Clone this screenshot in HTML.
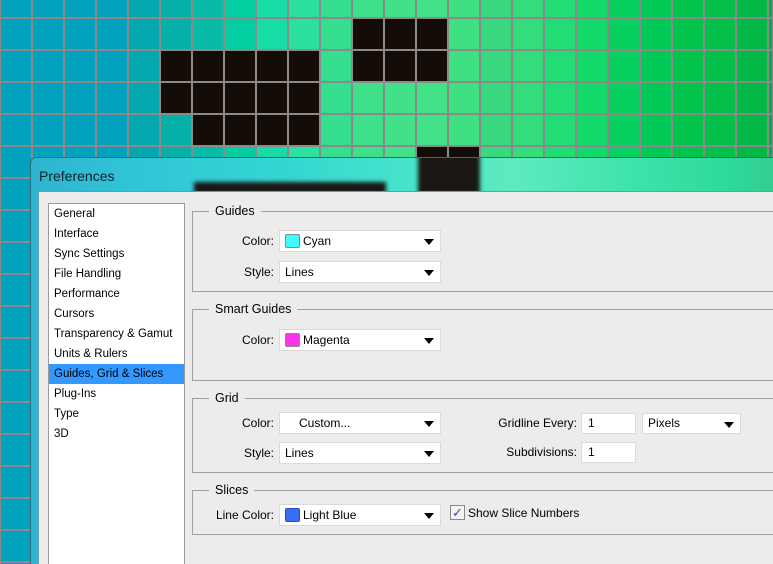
<!DOCTYPE html>
<html style="overflow:hidden;width:773px;height:564px"><head><meta charset="utf-8"><style>
*{margin:0;padding:0;box-sizing:border-box}
body{width:773px;height:564px;overflow:hidden;position:relative;font-family:"Liberation Sans",sans-serif;font-size:12px;color:#000;background:#00a2bd}
.col{position:absolute;top:0;height:564px;width:32px}
.blk{position:absolute;background:#140c06}
#grid{position:absolute;left:0;top:0;width:773px;height:564px;
background-image:repeating-linear-gradient(90deg,#8a8a8a 0 2px,transparent 2px 32px),repeating-linear-gradient(180deg,transparent 0 17px,#8a8a8a 17px 19px,transparent 19px 32px);background-position:-1px 0,0 0}
#dlg{position:absolute;left:30px;top:157px;width:743px;height:407px;border-radius:6px 0 0 0;border:1px solid #2a6d7a;border-right:0;border-bottom:0;overflow:hidden;
background:linear-gradient(90deg,#2fb4cf 0,#30c4d6 100px,#34d6d2 250px,#4ce8c8 420px,#5eeabf 480px,#3ee3ac 600px,#2ed99a 700px,#36c88a 760px)}
#title{position:absolute;left:8px;top:10px;font-size:14px;color:#102030;font-family:"Liberation Sans",sans-serif}
#body{position:absolute;left:7px;top:33px;width:760px;height:400px;background:#ececec;border-top:1px solid #6d9aa3;border-left:1px solid #6d9aa3}
.blur{position:absolute;background:#1a1614;filter:blur(2px)}
.list{position:absolute;left:48px;top:203px;width:137px;height:370px;background:#fff;border:1px solid #9a9a9a}
.list div{height:20px;line-height:20px;padding-left:5px;font-size:11.5px}
.list .sel{background:#3399ff}
.gb{position:absolute;left:192px;width:600px;border:1px solid #a0a0a0}
.gb span{position:absolute;left:16px;top:-9px;background:#ececec;padding:0 6px;font-size:12.5px;line-height:16px}
.dd{position:absolute;height:22px;background:#fff;border:1px solid #dadada;line-height:20px;padding-left:5px;font-size:12px}
.dd:after{content:"";position:absolute;right:6px;top:8px;border-left:5px solid transparent;border-right:5px solid transparent;border-top:6px solid #000}
.sw{display:inline-block;width:15px;height:14px;vertical-align:-3px;margin-right:3px;border:1px solid #888;border-radius:2px}
.lb{position:absolute;text-align:right;font-size:12px;line-height:22px}
.in{position:absolute;height:21px;width:55px;background:#fff;border:1px solid #dadada;padding-left:6px;line-height:19px}
</style></head><body>
<div class="col" style="left:0;width:128px;background:#00a2bd"></div>
<div class="col" style="left:128px;background:#02a7b0"></div>
<div class="col" style="left:160px;background:#04b0a8"></div>
<div class="col" style="left:192px;background:#08bba8"></div>
<div class="col" style="left:224px;background:#02cea2"></div>
<div class="col" style="left:256px;background:#18dca6"></div>
<div class="col" style="left:288px;background:#2ce1a0"></div>
<div class="col" style="left:320px;background:#36de90"></div>
<div class="col" style="left:352px;background:#3fe08a"></div>
<div class="col" style="left:384px;background:#42e088"></div>
<div class="col" style="left:416px;background:#44e286"></div>
<div class="col" style="left:448px;background:#3fe082"></div>
<div class="col" style="left:480px;background:#3ad87c"></div>
<div class="col" style="left:512px;background:#34dc7c"></div>
<div class="col" style="left:544px;background:#22dc74"></div>
<div class="col" style="left:576px;background:#14d86a"></div>
<div class="col" style="left:608px;background:#08d060"></div>
<div class="col" style="left:640px;background:#02c856"></div>
<div class="col" style="left:672px;background:#00c44c"></div>
<div class="col" style="left:704px;background:#04c04a"></div>
<div class="col" style="left:736px;background:#04b848"></div>
<div class="col" style="left:768px;width:5px;background:#02b042"></div>
<div class="blk" style="left:160px;top:50px;width:160px;height:64px"></div>
<div class="blk" style="left:192px;top:114px;width:128px;height:32px"></div>
<div class="blk" style="left:352px;top:18px;width:96px;height:64px"></div>
<div class="blk" style="left:416px;top:146px;width:64px;height:12px"></div>
<div id="grid"></div>
<div id="dlg">
<div class="blur" style="left:163px;top:24px;width:192px;height:12px"></div>
<div class="blur" style="left:387px;top:-4px;width:62px;height:40px"></div>
<div id="title">Preferences</div>
<div id="body"></div>
</div>
<div class="list">
<div>General</div><div>Interface</div><div>Sync Settings</div><div>File Handling</div><div>Performance</div><div>Cursors</div><div>Transparency &amp; Gamut</div><div>Units &amp; Rulers</div><div class="sel">Guides, Grid &amp; Slices</div><div>Plug-Ins</div><div>Type</div><div>3D</div>
</div>

<div class="gb" style="top:211px;height:81px"><span>Guides</span></div>
<div class="lb" style="left:200px;width:74px;top:230px">Color:</div>
<div class="dd" style="left:279px;top:230px;width:162px"><i class="sw" style="background:#40fcfc"></i>Cyan</div>
<div class="lb" style="left:200px;width:74px;top:261px">Style:</div>
<div class="dd" style="left:279px;top:261px;width:162px">Lines</div>

<div class="gb" style="top:309px;height:72px"><span>Smart Guides</span></div>
<div class="lb" style="left:200px;width:74px;top:329px">Color:</div>
<div class="dd" style="left:279px;top:329px;width:162px"><i class="sw" style="background:#fc34ec"></i>Magenta</div>

<div class="gb" style="top:398px;height:75px"><span>Grid</span></div>
<div class="lb" style="left:200px;width:74px;top:412px">Color:</div>
<div class="dd" style="left:279px;top:412px;width:162px;padding-left:19px">Custom...</div>
<div class="lb" style="left:200px;width:74px;top:442px">Style:</div>
<div class="dd" style="left:279px;top:442px;width:162px">Lines</div>
<div class="lb" style="left:470px;width:107px;top:412px">Gridline Every:</div>
<div class="in" style="left:581px;top:413px">1</div>
<div class="dd" style="left:642px;top:413px;width:99px;height:21px;line-height:19px">Pixels</div>
<div class="lb" style="left:470px;width:107px;top:441px">Subdivisions:</div>
<div class="in" style="left:581px;top:442px">1</div>

<div class="gb" style="top:490px;height:45px"><span>Slices</span></div>
<div class="lb" style="left:200px;width:74px;top:504px">Line Color:</div>
<div class="dd" style="left:279px;top:504px;width:162px"><i class="sw" style="background:#3a6cf4;border-color:#2a4cc0"></i>Light Blue</div>
<div style="position:absolute;left:450px;top:505px;width:15px;height:15px;border:1px solid #888;background:#f4f4f4;font-size:13px;line-height:13px;text-align:center;color:#2a4a9a">✓</div>
<div class="lb" style="left:468px;top:502px">Show Slice Numbers</div>
</body></html>
